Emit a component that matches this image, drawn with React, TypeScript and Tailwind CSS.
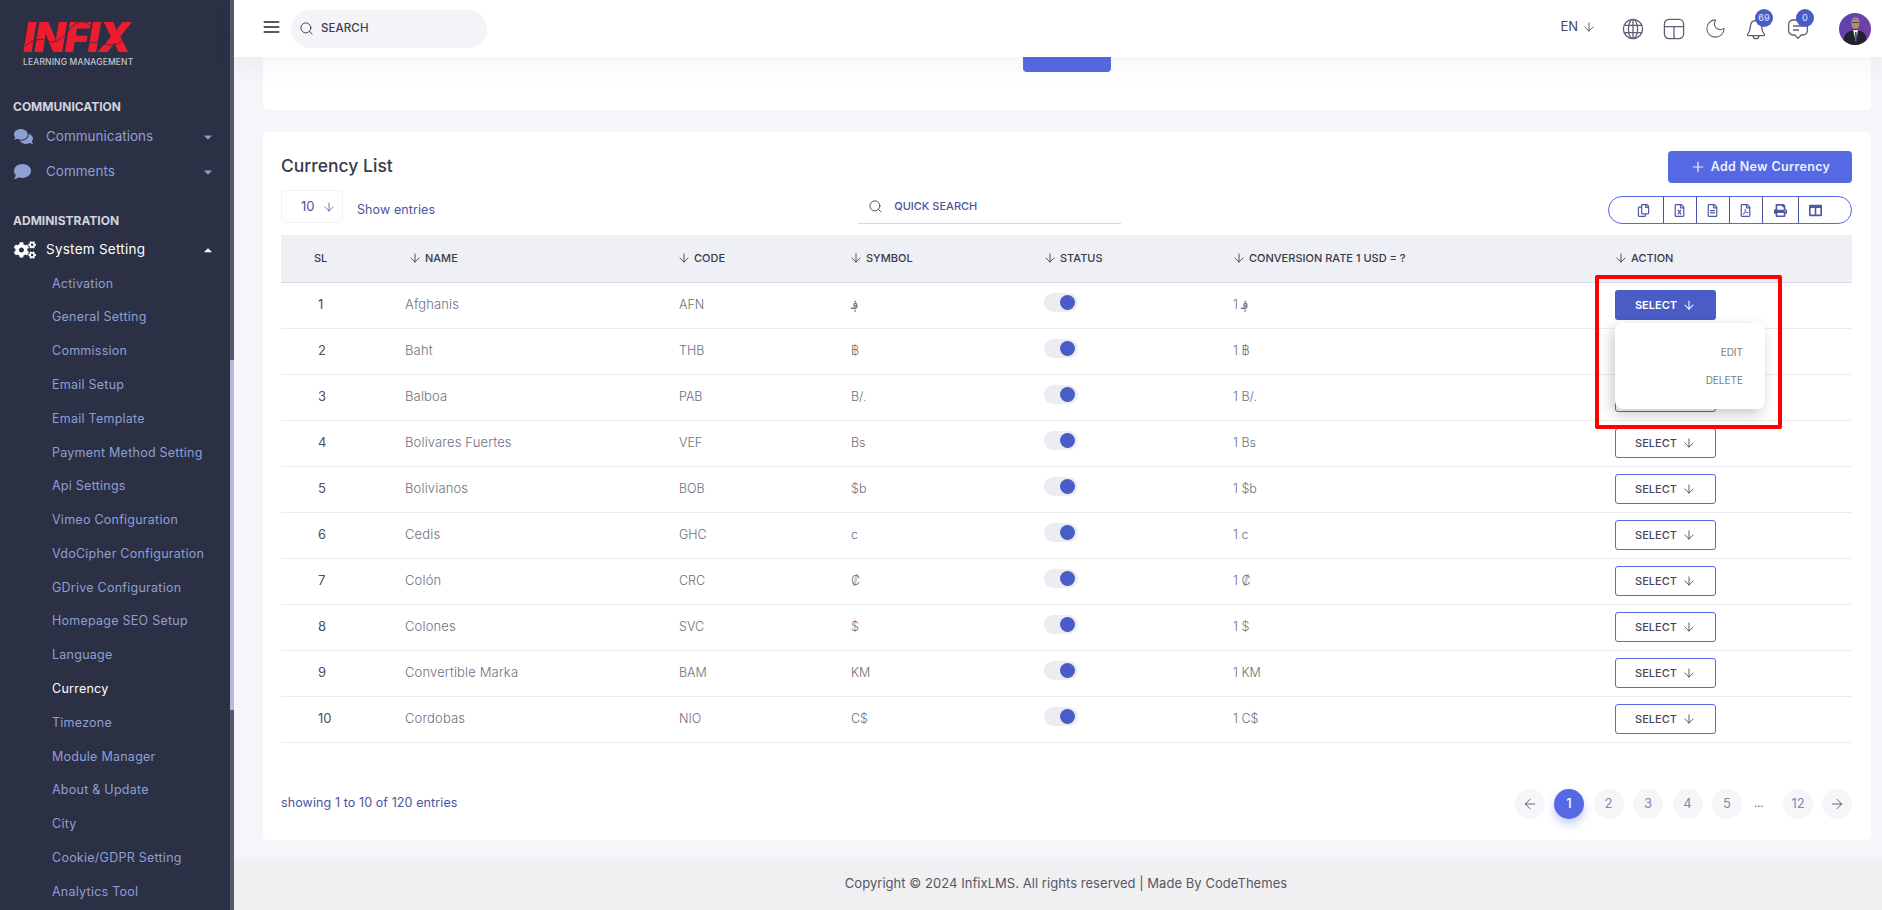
import { ReactNode } from "react";
import { ArrowDown, ArrowLeft, ArrowRight, Menu, Moon, Plus, Search } from "lucide-react";
import {
  FaCaretDown,
  FaCaretUp,
  FaCogs,
  FaColumns,
  FaComment,
  FaComments,
  FaPrint,
  FaRegCopy,
  FaRegFileAlt,
  FaRegFileExcel,
  FaRegFilePdf,
} from "react-icons/fa";

const subMenu = [
  "Activation",
  "General Setting",
  "Commission",
  "Email Setup",
  "Email Template",
  "Payment Method Setting",
  "Api Settings",
  "Vimeo Configuration",
  "VdoCipher Configuration",
  "GDrive Configuration",
  "Homepage SEO Setup",
  "Language",
  "Currency",
  "Timezone",
  "Module Manager",
  "About & Update",
  "City",
  "Cookie/GDPR Setting",
  "Analytics Tool",
];

const currencies = [
  ["Afghanis", "AFN", "؋"],
  ["Baht", "THB", "฿"],
  ["Balboa", "PAB", "B/."],
  ["Bolivares Fuertes", "VEF", "Bs"],
  ["Bolivianos", "BOB", "$b"],
  ["Cedis", "GHC", "c"],
  ["Colón", "CRC", "₡"],
  ["Colones", "SVC", "$"],
  ["Convertible Marka", "BAM", "KM"],
  ["Cordobas", "NIO", "C$"],
];

function Logo() {
  return (
    <div className="h-[44px] w-[110px]">
      <svg className="block" width="110" height="32" viewBox="0 0 110 32" fill="none">
        <text x="0" y="30" fill="#ed1c2e" fontSize="41" fontWeight="900" fontStyle="italic" letterSpacing="-1">
          INFIX
        </text>
        <g stroke="#2b3044" strokeWidth="0.8">
          <path d="M2 24 Q14 14 24 19 T46 8 T70 6" />
          <path d="M52 28 Q68 16 82 22 T108 8" />
        </g>
      </svg>
      <div className="mt-[3px] text-[8.5px] leading-[10px] font-medium tracking-[0.15px] whitespace-nowrap text-[#c4c6cf]">LEARNING MANAGEMENT</div>
    </div>
  );
}

function MenuHead({ children }: { children: ReactNode }) {
  return <div className="pl-[13px] text-[12px] leading-[16px] font-bold text-[#d2d4de]">{children}</div>;
}

function Sidebar() {
  return (
    <aside className="flex h-full w-[234px] shrink-0 bg-[#2b3044]">
      <div className="w-[230px] overflow-hidden">
        <div className="pt-[22px] pl-[23px]">
          <Logo />
        </div>
        <div className="mt-[33px]">
          <MenuHead>COMMUNICATION</MenuHead>
        </div>
        <div className="mt-[4px] flex h-[35px] items-center pr-[16px] pl-[14px] text-[#8e9fd4]">
          <span className="w-[32px] shrink-0">
            <FaComments size={19} />
          </span>
          <span className="text-[13.5px]">Communications</span>
          <FaCaretDown size={12} className="ml-auto" />
        </div>
        <div className="flex h-[35px] items-center pr-[16px] pl-[14px] text-[#8e9fd4]">
          <span className="w-[32px] shrink-0">
            <FaComment size={17} />
          </span>
          <span className="text-[13.5px]">Comments</span>
          <FaCaretDown size={12} className="ml-auto" />
        </div>
        <div className="mt-[24px]">
          <MenuHead>ADMINISTRATION</MenuHead>
        </div>
        <div className="mt-[3px] flex h-[35px] items-center pr-[16px] pl-[14px] text-white">
          <span className="w-[32px] shrink-0">
            <FaCogs size={22} />
          </span>
          <span className="text-[13.5px] tracking-[0.25px]">System Setting</span>
          <FaCaretUp size={12} className="ml-auto" />
        </div>
        <ul className="pl-[52px]">
          {subMenu.map((item) => (
            <li
              key={item}
              className={`flex h-[33.8px] items-center text-[12.5px] tracking-[0.25px] whitespace-nowrap ${item === "Currency" ? "text-white" : "text-[#8e9fd4]"}`}
            >
              {item}
            </li>
          ))}
        </ul>
      </div>
      <div className="h-full w-[4px] bg-[#555a6b] pt-[360px]">
        <div className="h-[350px] bg-[#b3bbdb]" />
      </div>
    </aside>
  );
}

function GlobeIcon() {
  return (
    <svg width="22" height="22" viewBox="0 0 22 22" fill="none" stroke="#5b6072" strokeWidth="1.3">
      <circle cx="11" cy="11" r="9.6" />
      <ellipse cx="11" cy="11" rx="4.6" ry="9.6" />
      <path d="M11 1.4v19.2M2.4 7.4h17.2M2.4 14.6h17.2" />
    </svg>
  );
}

function LayoutIcon() {
  return (
    <svg width="22" height="22" viewBox="0 0 22 22" fill="none" stroke="#5b6072" strokeWidth="1.3">
      <rect x="1.4" y="1.4" width="19.2" height="19.2" rx="4.5" />
      <path d="M1.4 8.6h19.2M11 8.6v12" />
    </svg>
  );
}

function BellIcon() {
  return (
    <svg width="20" height="22" viewBox="0 0 20 22" fill="none" stroke="#5b6072" strokeWidth="1.3" strokeLinejoin="round">
      <path d="M10 2.5C6.2 2.5 4.6 5.4 4.4 8.4 4.2 11.6 3.6 14 1.6 16.4c-.4.6 0 1.2.7 1.2h15.4c.7 0 1.1-.6.7-1.2-2-2.4-2.6-4.8-2.8-8C15.4 5.4 13.8 2.5 10 2.5Z" />
      <path d="M7 17.8c.3 1.8 1.5 2.8 3 2.8s2.7-1 3-2.8" />
    </svg>
  );
}

function ChatIcon() {
  return (
    <svg width="22" height="22" viewBox="0 0 22 22" fill="none" stroke="#5b6072" strokeWidth="1.3" strokeLinejoin="round">
      <path d="M6 2h10c2.4 0 4.4 2 4.4 4.4v6.2c0 2.4-2 4.4-4.4 4.4h-1.800L11 20.4 7.800 17H6c-2.400 0-4.400-2-4.400-4.400V6.400C1.600 4 3.600 2 6 2Z" />
      <path d="M6 8h10M6 12h6" />
    </svg>
  );
}

function Avatar() {
  return (
    <svg width="32" height="32" viewBox="0 0 32 32">
      <defs>
        <linearGradient id="avatarBg" x1="0" y1="0" x2="1" y2="1">
          <stop offset="0" stopColor="#5a43b8" />
          <stop offset="1" stopColor="#7a3f9c" />
        </linearGradient>
        <clipPath id="avatarClip">
          <circle cx="16" cy="16" r="16" />
        </clipPath>
      </defs>
      <g clipPath="url(#avatarClip)">
        <rect width="32" height="32" fill="url(#avatarBg)" />
        <path d="M4 32c0-9 3-13 8-14l4-2 5 2c5 1 7 5 7 14Z" fill="#22222e" />
        <path d="M14 17h5l-2 12Z" fill="#e8e8ee" />
        <path d="M16 19h1.5l.5 8-1.500 1Z" fill="#34405e" />
        <ellipse cx="16.5" cy="10.5" rx="4" ry="5.5" fill="#b98a72" />
        <path d="M12.3 9c0-3.5 2-5 4.5-5s4 1.5 4 5c-1-2-2.5-2.5-4-2.5S13.3 7 12.3 9Z" fill="#8d8480" />
        <path d="M13.5 9.5h6" stroke="#2a2a30" strokeWidth="0.8" />
      </g>
    </svg>
  );
}

function Badge({ children, className }: { children: ReactNode; className: string }) {
  return (
    <span className={`absolute flex h-[18px] w-[18px] items-center justify-center rounded-full bg-[#4a5cc5] text-[9px] leading-none font-medium text-[#d8dcf5] ${className}`}>
      {children}
    </span>
  );
}

function Header() {
  return (
    <header className="relative z-10 flex h-[57px] shrink-0 items-center bg-white pr-[11px] pl-[29px] shadow-[0_8px_24px_rgba(40,40,70,0.05)]">
      <Menu size={20} strokeWidth={2.2} className="-mt-[4px] w-[17px] scale-x-125 text-[#1f2130]" />
      <div className="ml-[11px] flex h-[38px] w-[196px] items-center rounded-full bg-[#f3f3f8] pl-[8px]">
        <Search size={15} strokeWidth={1.5} className="text-[#3c3f4e]" />
        <span className="ml-[7px] text-[11.5px] font-medium tracking-[0.1px] text-[#3c3f4e]">SEARCH</span>
      </div>
      <div className="ml-auto flex items-center">
        <span className="-mt-[4px] text-[13px] text-[#44475a]">EN</span>
        <ArrowDown size={14} strokeWidth={1.5} className="-mt-[4px] ml-[4px] text-[#44475a]" />
        <div className="ml-[26px] flex items-center gap-[19px]">
          <GlobeIcon />
          <LayoutIcon />
          <Moon size={23} strokeWidth={1.1} className="text-[#5b6072]" />
          <div className="relative">
            <BellIcon />
            <Badge className="-top-[9px] left-[9px]">69</Badge>
          </div>
          <div className="relative ml-[2px]">
            <ChatIcon />
            <Badge className="-top-[9px] left-[9px]">0</Badge>
          </div>
          <div className="ml-[11px]">
            <Avatar />
          </div>
        </div>
      </div>
    </header>
  );
}

const exportIcons = [
  { icon: <FaRegCopy size={13} />, cls: "w-[54.5px] pl-[16px]" },
  { icon: <FaRegFileExcel size={13} />, cls: "w-[33px]" },
  { icon: <FaRegFileAlt size={13} />, cls: "w-[33px]" },
  { icon: <FaRegFilePdf size={13} />, cls: "w-[33px]" },
  { icon: <FaPrint size={13} />, cls: "w-[36px]" },
  { icon: <FaColumns size={13} />, cls: "w-[52.5px] pr-[18px]" },
];

function SortHead({ label, className }: { label: string; className?: string }) {
  return (
    <th className={`text-left text-[11px] font-medium text-[#373a47] ${className ?? ""}`}>
      <span className="flex items-center gap-[3px] whitespace-nowrap">
        <ArrowDown size={14} strokeWidth={1.5} />
        {label}
      </span>
    </th>
  );
}

function CurrencyTable() {
  return (
    <table className="w-full table-fixed border-collapse">
      <colgroup>
        <col className="w-[112px]" />
        <col className="w-[269px]" />
        <col className="w-[172px]" />
        <col className="w-[194px]" />
        <col className="w-[189px]" />
        <col className="w-[382px]" />
        <col />
      </colgroup>
      <thead>
        <tr className="h-[47px] border-b border-[#d3d8ea] bg-[#eef0f6]">
          <th className="pl-[33px] text-left text-[11px] font-medium text-[#373a47]">SL</th>
          <SortHead label="NAME" className="pl-[15px]" />
          <SortHead label="CODE" className="pl-[15px]" />
          <SortHead label="SYMBOL" className="pl-[15px]" />
          <SortHead label="STATUS" className="pl-[15px]" />
          <SortHead label="CONVERSION RATE 1 USD = ?" className="pl-[15px]" />
          <SortHead label="ACTION" className="pl-[15px]" />
        </tr>
      </thead>
      <tbody className="text-[12.5px] text-[#6e707b]">
        {currencies.map(([name, code, symbol], i) => (
          <tr key={code} className="h-[46px] border-b border-[#eaecf2]">
            <td className="pl-[37px] text-[13px] text-[#4d4f5a]">{i + 1}</td>
            <td className="pl-[12px] text-[13px] font-light tracking-[0.15px]">{name}</td>
            <td className="pl-[17px] font-light">{code}</td>
            <td className="pl-[17px] font-light">{symbol}</td>
            <td className="pl-[16px]">
              <div className="-mt-[5px] flex h-[19px] w-[34px] items-center justify-end rounded-full bg-[#ecedf3] pr-[3px]">
                <span className="h-[15px] w-[15px] rounded-full bg-[#4a5cc5]" />
              </div>
            </td>
            <td className="pl-[16px] font-light">1 {symbol}</td>
            <td className="pl-[16px]">
              {i === 0 ? (
                <button className="flex h-[30px] w-[101px] items-center justify-center gap-[5px] rounded-[3px] bg-[#4a5cc5] text-[11px] font-semibold text-white">
                  SELECT <ArrowDown size={14} strokeWidth={1.8} />
                </button>
              ) : (
                <button className="flex h-[30px] w-[101px] items-center justify-center gap-[5px] rounded-[3px] border border-[#5669e4] bg-white text-[11px] font-medium text-[#44475a]">
                  SELECT <ArrowDown size={14} strokeWidth={1.5} />
                </button>
              )}
            </td>
          </tr>
        ))}
      </tbody>
    </table>
  );
}

function PageDot({ children, active }: { children: ReactNode; active?: boolean }) {
  return (
    <span
      className={`flex h-[30px] w-[30px] items-center justify-center rounded-full text-[13px] ${
        active ? "bg-[#5669e4] font-medium text-white shadow-[0_5px_10px_rgba(86,105,228,0.35)]" : "bg-[#f6f6f9] text-[#8189b5]"
      }`}
    >
      {children}
    </span>
  );
}

function Pagination() {
  return (
    <div className="flex items-center">
      <PageDot>
        <ArrowLeft size={16} strokeWidth={1.2} className="text-[#3c3f4e]" />
      </PageDot>
      <div className="ml-[9.5px] flex items-center gap-[9.5px]">
        <PageDot active>1</PageDot>
        <PageDot>2</PageDot>
        <PageDot>3</PageDot>
        <PageDot>4</PageDot>
        <PageDot>5</PageDot>
      </div>
      <span className="mr-[21px] ml-[12px] w-[8px] text-[11px] text-[#4a55a0]">...</span>
      <PageDot>12</PageDot>
      <span className="ml-[9px]">
        <PageDot>
          <ArrowRight size={16} strokeWidth={1.2} className="text-[#3c3f4e]" />
        </PageDot>
      </span>
    </div>
  );
}

function CurrencyCard() {
  return (
    <section className="relative mt-[22px] h-[708px] rounded-[5px] bg-white pt-[19px] pr-[19px] pl-[18px]">
      <div className="flex items-start justify-between">
        <h3 className="pt-[3px] text-[17.5px] leading-[24px] font-medium text-[#373a47]">Currency List</h3>
        <button className="flex h-[32px] w-[184px] items-center justify-center gap-[5px] rounded-[4px] bg-[#5669e4] text-[12.5px] font-semibold tracking-[0.35px] text-[#eef0ff]">
          <Plus size={16} strokeWidth={1.8} />
          Add New Currency
        </button>
      </div>
      <div className="relative mt-[7px] flex h-[45px] items-start">
        <div className="flex h-[33px] w-[62px] items-center rounded-[4px] border border-[#f0f0f5] pl-[19px] text-[13px] text-[#4a55a0]">
          10
          <ArrowDown size={14} strokeWidth={1.4} className="ml-[7px]" />
        </div>
        <span className="mt-[11px] ml-[14px] text-[12.5px] tracking-[0.1px] text-[#4a55a0]">Show entries</span>
        <div className="ml-[423px] flex h-[34px] w-[263px] items-center border-b border-[#d3d5e8] pl-[10px]">
          <Search size={15} strokeWidth={1.4} className="text-[#3c3f4e]" />
          <span className="ml-[11px] text-[11px] font-medium text-[#4a55a0]">QUICK SEARCH</span>
        </div>
        <div className="ml-auto mt-[6px] flex h-[28px] items-center rounded-full border border-[#5669e4] text-[#4f5aa3]">
          {exportIcons.map((e, i) => (
            <span key={i} className={`flex h-full items-center justify-center ${e.cls} ${i < 5 ? "border-r border-[#4a55a0]" : ""}`}>
              {e.icon}
            </span>
          ))}
        </div>
      </div>
      <CurrencyTable />
      <div className="mt-[46px] flex items-center justify-between">
        <span className="text-[12.5px] tracking-[0.1px] text-[#4a55a0]">showing 1 to 10 of 120 entries</span>
        <Pagination />
      </div>
      {/* open dropdown for the first row */}
      <div className="absolute top-[191px] left-[1352px] flex h-[86px] w-[150px] flex-col items-end justify-center gap-[14px] rounded-[8px] bg-white pr-[22px] text-[10px] leading-[14px] text-[#7a7c85] shadow-[-3px_5px_14px_rgba(0,0,0,0.22)]">
        <span>EDIT</span>
        <span>DELETE</span>
      </div>
      {/* red annotation box from the screenshot */}
      <div className="absolute top-[143px] left-[1332px] h-[154px] w-[187px] rounded-[2px] border-[4px] border-[#ff0000]" />
    </section>
  );
}

export default function App() {
  return (
    <div className="flex h-[910px] w-[1882px] overflow-hidden bg-[#f5f5fa] font-['Inter',sans-serif]">
      <Sidebar />
      <main className="flex min-w-0 flex-1 flex-col">
        <Header />
        <div className="flex-1 overflow-hidden pr-[11px] pl-[29px]">
          <section className="flex h-[53px] justify-center rounded-b-[5px] bg-white">
            <div className="h-[15px] w-[88px] rounded-b-[4px] bg-[#5669e4]" />
          </section>
          <CurrencyCard />
        </div>
        <footer className="flex h-[51px] shrink-0 items-center justify-center bg-[#f0f0f3] pb-[2px] pl-[16px] text-[13px] tracking-[0.05px] text-[#55575f]">
          Copyright © 2024 InfixLMS. All rights reserved | Made By CodeThemes
        </footer>
      </main>
    </div>
  );
}
